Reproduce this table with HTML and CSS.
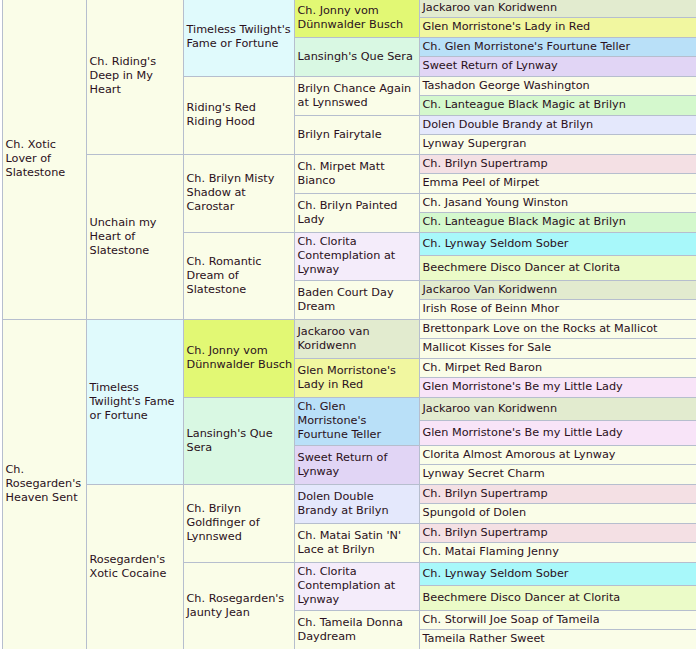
FILE: index.html
```html
<!DOCTYPE html>
<html>
<head>
<meta charset="utf-8">
<link rel="stylesheet" href="styles.css">
</head>
<body>
<table class="ped">
<colgroup><col class="w1"><col class="w2"><col class="w3"><col class="w4"><col class="w5"></colgroup>
<tr><td rowspan="16">Ch. Xotic Lover of Slatestone</td><td rowspan="8">Ch. Riding's Deep in My Heart</td><td rowspan="4" class="cy">Timeless Twilight's Fame or Fortune</td><td rowspan="2" class="lime c4">Ch. Jonny vom Dünnwalder Busch</td><td class="sage">Jackaroo van Koridwenn</td></tr>
<tr><td class="yel">Glen Morristone's Lady in Red</td></tr>
<tr><td rowspan="2" class="mint c4">Lansingh's Que Sera</td><td class="sky">Ch. Glen Morristone's Fourtune Teller</td></tr>
<tr><td class="lav">Sweet Return of Lynway</td></tr>
<tr><td rowspan="4">Riding's Red Riding Hood</td><td rowspan="2" class="c4">Brilyn Chance Again at Lynnswed</td><td>Tashadon George Washington</td></tr>
<tr><td class="grn">Ch. Lanteague Black Magic at Brilyn</td></tr>
<tr><td rowspan="2" class="c4">Brilyn Fairytale</td><td class="peri">Dolen Double Brandy at Brilyn</td></tr>
<tr><td>Lynway Supergran</td></tr>
<tr><td rowspan="8">Unchain my Heart of Slatestone</td><td rowspan="4">Ch. Brilyn Misty Shadow at Carostar</td><td rowspan="2" class="c4">Ch. Mirpet Matt Bianco</td><td class="pink">Ch. Brilyn Supertramp</td></tr>
<tr><td>Emma Peel of Mirpet</td></tr>
<tr><td rowspan="2" class="c4">Ch. Brilyn Painted Lady</td><td>Ch. Jasand Young Winston</td></tr>
<tr><td class="grn">Ch. Lanteague Black Magic at Brilyn</td></tr>
<tr><td rowspan="4">Ch. Romantic Dream of Slatestone</td><td rowspan="2" class="lil c4 tri">Ch. Clorita Contemplation at Lynway</td><td class="aqua">Ch. Lynway Seldom Sober</td></tr>
<tr><td class="beech">Beechmere Disco Dancer at Clorita</td></tr>
<tr><td rowspan="2" class="c4">Baden Court Day Dream</td><td class="sage">Jackaroo Van Koridwenn</td></tr>
<tr><td>Irish Rose of Beinn Mhor</td></tr>
<tr><td rowspan="16">Ch. Rosegarden's Heaven Sent</td><td rowspan="8" class="cy">Timeless Twilight's Fame or Fortune</td><td rowspan="4" class="lime">Ch. Jonny vom Dünnwalder Busch</td><td rowspan="2" class="sage c4">Jackaroo van Koridwenn</td><td>Brettonpark Love on the Rocks at Mallicot</td></tr>
<tr><td>Mallicot Kisses for Sale</td></tr>
<tr><td rowspan="2" class="yel c4">Glen Morristone's Lady in Red</td><td>Ch. Mirpet Red Baron</td></tr>
<tr><td class="rose">Glen Morristone's Be my Little Lady</td></tr>
<tr><td rowspan="4" class="mint">Lansingh's Que Sera</td><td rowspan="2" class="sky c4 tri">Ch. Glen Morristone's Fourtune Teller</td><td class="sage">Jackaroo van Koridwenn</td></tr>
<tr><td class="rose">Glen Morristone's Be my Little Lady</td></tr>
<tr><td rowspan="2" class="lav c4">Sweet Return of Lynway</td><td>Clorita Almost Amorous at Lynway</td></tr>
<tr><td>Lynway Secret Charm</td></tr>
<tr><td rowspan="8">Rosegarden's Xotic Cocaine</td><td rowspan="4">Ch. Brilyn Goldfinger of Lynnswed</td><td rowspan="2" class="peri c4">Dolen Double Brandy at Brilyn</td><td class="pink">Ch. Brilyn Supertramp</td></tr>
<tr><td>Spungold of Dolen</td></tr>
<tr><td rowspan="2" class="c4">Ch. Matai Satin 'N' Lace at Brilyn</td><td class="pink">Ch. Brilyn Supertramp</td></tr>
<tr><td>Ch. Matai Flaming Jenny</td></tr>
<tr><td rowspan="4">Ch. Rosegarden's Jaunty Jean</td><td rowspan="2" class="lil c4 tri">Ch. Clorita Contemplation at Lynway</td><td class="aqua">Ch. Lynway Seldom Sober</td></tr>
<tr><td class="beech">Beechmere Disco Dancer at Clorita</td></tr>
<tr><td rowspan="2" class="c4">Ch. Tameila Donna Daydream</td><td>Ch. Storwill Joe Soap of Tameila</td></tr>
<tr><td>Tameila Rather Sweet</td></tr>
</table>
</body>
</html>
```

FILE: styles.css
```css
html, body {
  margin: 0;
  padding: 0;
  overflow: hidden;
  background: #ffffff;
}

.ped {
  border-collapse: collapse;
  table-layout: fixed;
  width: 697px;
  margin: -2.3px 0 0 2px;
  font-family: "DejaVu Sans", Verdana, sans-serif;
  font-size: 11.25px;
  line-height: 14px;
  color: #2a1020;
}

.w1 { width: 84px; }
.w2 { width: 97px; }
.w3 { width: 111px; }
.w4 { width: 125px; }
.w5 { width: 280px; }

.ped td {
  border: 1px solid #b6bece;
  background: #fafde8;
  padding: 2px 0.5px 2px 2.5px;
  vertical-align: middle;
  text-align: left;
}

.ped tr:nth-child(even) > td:last-child {
  padding-top: 2.5px;
  padding-bottom: 2.5px;
}

.ped td.c4 { padding-right: 3.5px; }

.ped td.tri {
  padding-top: 2.5px;
  padding-bottom: 2.5px;
}

.ped td.cy { background: #e0fafc; }
.ped td.lime { background: #e2f874; }
.ped td.mint { background: #d9f8e3; }
.ped td.sage { background: #e2ebcf; }
.ped td.yel { background: #f1f7a0; }
.ped td.sky { background: #b9e0f8; }
.ped td.lav { background: #e1d5f5; }
.ped td.grn { background: #d4f8cd; }
.ped td.peri { background: #e4e8fc; }
.ped td.pink { background: #f4e0e4; }
.ped td.aqua { background: #a8f8fa; }
.ped td.beech { background: #ebfbc8; }
.ped td.lil { background: #f4ecfa; }
.ped td.rose { background: #f8e4f8; }
```
